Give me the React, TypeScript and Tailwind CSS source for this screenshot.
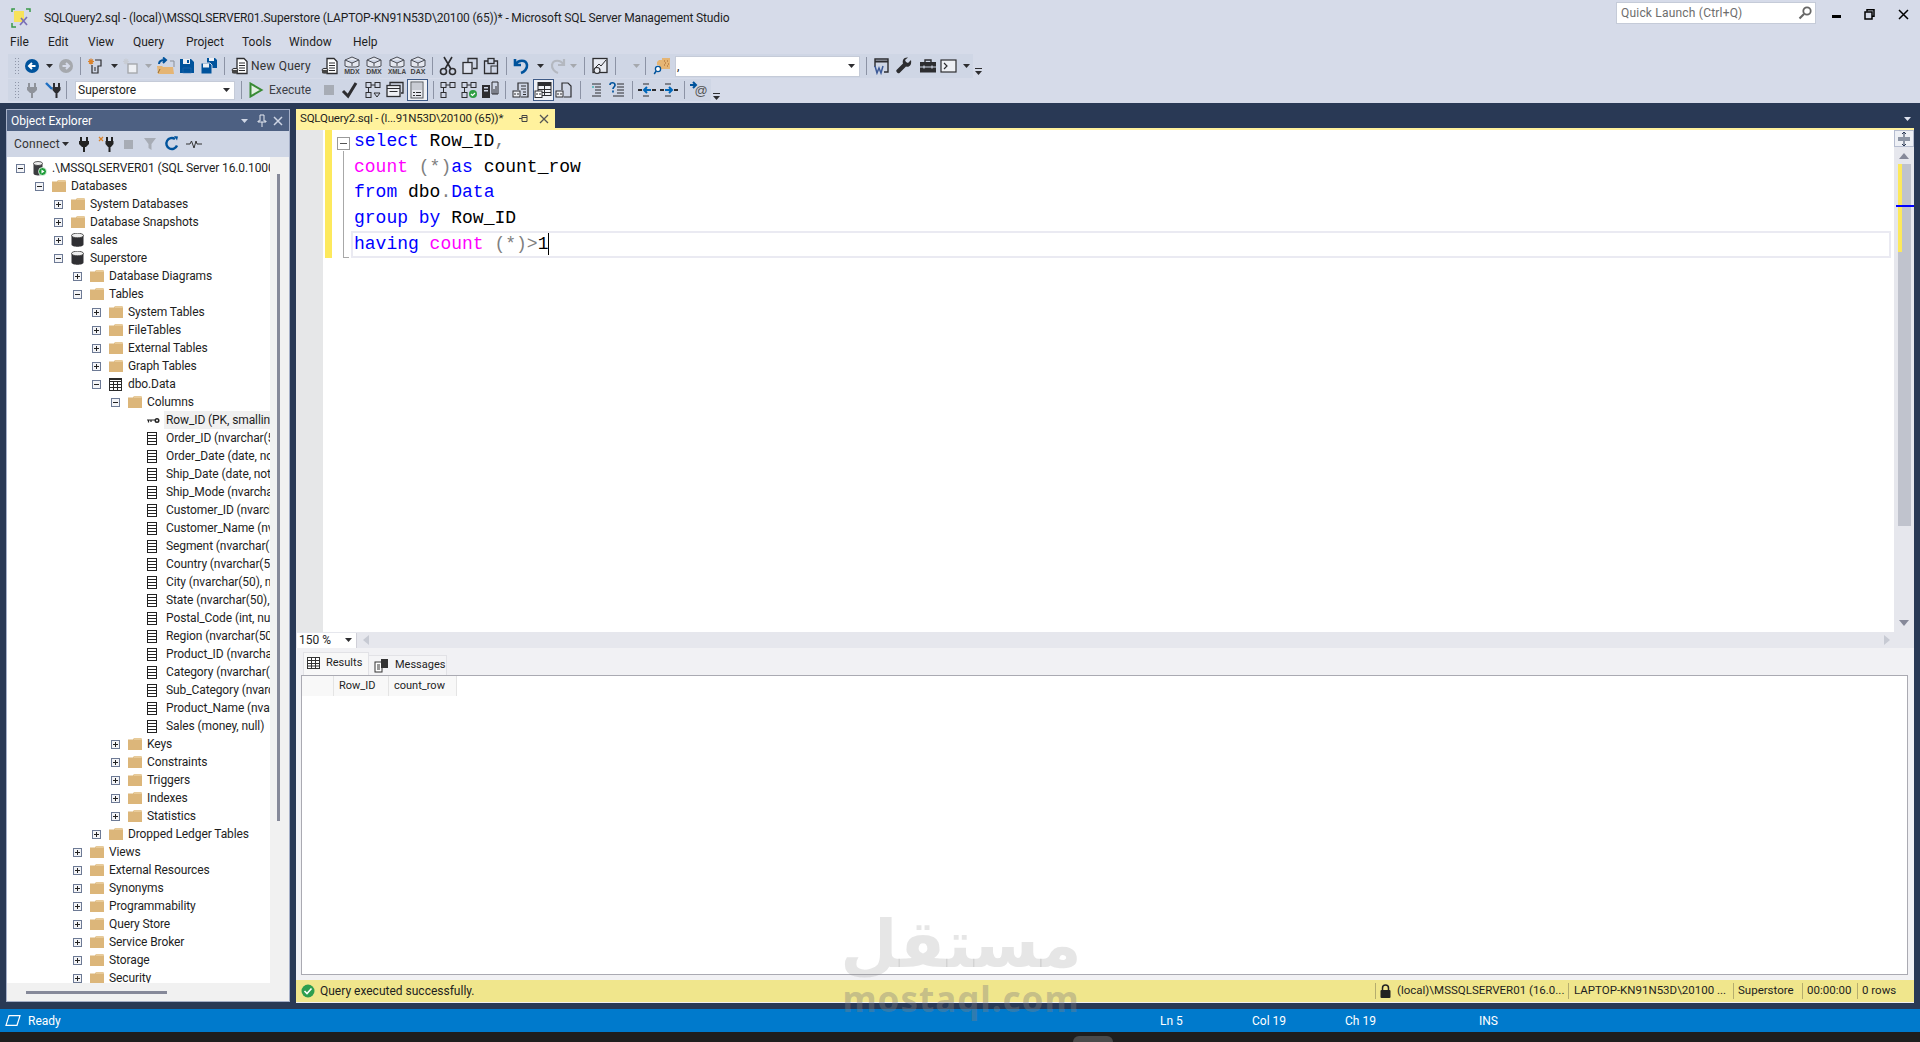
import React from "react";

const ui = "font-['Roboto',sans-serif]";

function V({ children, w = 16, h = 16, vb = "0 0 16 16" }: { children: React.ReactNode; w?: number; h?: number; vb?: string }) {
  return <svg width={w} height={h} viewBox={vb} className="block shrink-0" fill="none">{children}</svg>;
}
const K = "#2d2d30";
const B = "#00539c";

const Dd = ({ c = "#2d2d30" }: { c?: string }) => <V w={7} h={4} vb="0 0 7 4"><path d="M0 0h7L3.5 4z" fill={c} /></V>;
const Back = () => <V><circle cx="8" cy="8" r="7" fill={B} /><path d="M11.5 8H5.5M8 5L5 8l3 3" stroke="#fff" strokeWidth="2" /></V>;
const Fwd = () => <V><circle cx="8" cy="8" r="7" fill="#a5a8ad" /><path d="M4.5 8h6M8 5l3 3-3 3" stroke="#d6dbe9" strokeWidth="2" /></V>;
const NewProj = ({ off }: { off?: boolean }) => (
  <V w={18} h={18} vb="0 0 18 18">
    <path d="M4 1.5v6M1 4.5h6M2 2.5l4 4M6 2.5l-4 4" stroke={off ? "#c8ccd4" : "#d9822b"} strokeWidth="1.2" />
    {off ? <rect x="6" y="7" width="9" height="9" fill="#eef0f4" stroke="#a5a8ad" strokeWidth="1.4" /> : <path d="M8 3h6v6h-3v7H5V8" stroke={K} strokeWidth="1.2" />}
    {!off && <path d="M7 11h2M7 13h2" stroke={K} />}
  </V>
);
const Open = () => (
  <V w={20} h={18} vb="0 0 20 18">
    <path d="M1 9h5l1 1h10l1 7H2z" fill="#e5b574" />
    <path d="M2 16l2-4" stroke="#8f6a33" />
    <path d="M14 4h4v6" stroke="#8a8f99" />
    <path d="M3 7c0-3 2-4 6-4M7 0.5L10 3 7 6" stroke={B} strokeWidth="2" />
  </V>
);
const Save = () => <V><path d="M1 1h11l3 3v11H1z" fill={B} /><rect x="4" y="1" width="7" height="5" fill="#eef0f4" /><rect x="8" y="2" width="2" height="3" fill={B} /><rect x="4" y="10" width="8" height="5" fill={B} stroke="#2d6cb0" strokeWidth=".5" /></V>;
const SaveAll = () => (
  <V w={18} h={18} vb="0 0 18 18">
    <path d="M7 1h8l2 2v8H7z" fill={B} /><rect x="9" y="1" width="5" height="3" fill="#eef0f4" />
    <path d="M1 6h9l2 2v9H1z" fill={B} stroke="#cfd6e5" /><rect x="3" y="6.5" width="6" height="4" fill="#eef0f4" />
  </V>
);
const DocLines = ({ db }: { db?: boolean }) => (
  <V w={18} h={18} vb="0 0 18 18">
    <path d="M6 1.5h7l3 3v12H6z" fill="#fff" stroke={K} strokeWidth="1.3" />
    <path d="M8 6h6M8 8.5h6M8 11h6M8 13.5h6" stroke={K} />
    {db && <><ellipse cx="4" cy="13" rx="3" ry="1.6" fill="#eee" stroke={K} /><path d="M1 13v2.5c0 1.6 6 1.6 6 0V13z" fill="#444" /></>}
  </V>
);
const Cube = ({ t }: { t: string }) => (
  <V w={20} h={20} vb="0 0 20 20">
    <path d="M10 1l7 3v6l-3 1H6l-3-1V4zM3 4l7 3 7-3M10 7v3" stroke="#4a4d55" fill="#e4e7ef" strokeWidth="1" />
    <text x="10" y="18" textAnchor="middle" fontSize={t.length > 3 ? 6.4 : 7} fontWeight="700" fontFamily="Liberation Sans" fill="#444">{t}</text>
  </V>
);
const Cut = () => <V w={18} h={20} vb="0 0 18 20"><path d="M5 1l7 12M13 1L6 13" stroke={K} strokeWidth="1.6" /><circle cx="4.5" cy="15.5" r="3" stroke={K} strokeWidth="1.6" /><circle cx="13.5" cy="15.5" r="3" stroke={K} strokeWidth="1.6" /></V>;
const Copy = () => <V w={18} h={18} vb="0 0 18 18"><path d="M7 5V1.5h9v10h-4" stroke={K} strokeWidth="1.3" /><rect x="2" y="5.5" width="9" height="11" stroke={K} strokeWidth="1.3" fill="#dfe3ee" /></V>;
const Paste = () => <V w={18} h={18} vb="0 0 18 18"><path d="M6 4H2.5v12.5h13V4H12" stroke={K} strokeWidth="1.3" /><rect x="6" y="1.5" width="6" height="5" stroke={K} strokeWidth="1.3" /><rect x="9" y="9" width="6.5" height="7.5" stroke={K} /></V>;
const Undo = ({ c = B, w = 2.6 }: { c?: string; w?: number }) => <V w={18} h={18} vb="0 0 18 18"><path d="M2 2v6h6" stroke={c} strokeWidth={w} /><path d="M3 7c2-4 10-5 11 1 .5 4-3 7-6 8" stroke={c} strokeWidth={w} /></V>;
const Redo = () => <div className="-scale-x-100"><Undo c="#b4b8c0" w={2.2} /></div>;
const Chart = () => <V w={18} h={18} vb="0 0 18 18"><rect x="2" y="1.5" width="14" height="14" stroke={K} strokeWidth="1.3" fill="#e8ebf2" /><path d="M4 11l4-4 2 2 5-6" stroke={K} /><circle cx="6" cy="13.5" r="3" fill="#e8ebf2" stroke={K} strokeWidth="1.2" /></V>;
const Find = () => <V w={18} h={18} vb="0 0 18 18"><path d="M4 5l2-2h3V1h8v11H6V8H4z" fill="#e5b574" /><path d="M11 4h1M14 4h1M12 6h1M15 7h1M11 8h1M14 9h1" stroke="#a0622a" /><circle cx="5" cy="12" r="2.6" fill="#fff" stroke={B} strokeWidth="1.3" /><path d="M3.2 14l-2 3" stroke={B} strokeWidth="1.5" /></V>;
const WinCode = () => <V w={18} h={18} vb="0 0 18 18"><path d="M2 10V2h13v13h-4" stroke={K} strokeWidth="1.4" /><path d="M2 4.5h13" stroke={K} strokeWidth="2" /><path d="M2 9l2 7 2-5 2 5 2-7" stroke="#3d5a98" strokeWidth="1.5" /></V>;
const Wrench = () => <V w={18} h={18} vb="0 0 18 18"><path d="M16 3l-3 3-2-1-1-2 3-2.5C9 0 7 3 8 6.5L1.5 13c-1 1.5 1.5 4 3 3L11 9.5c3 1 6-1 5-6.5z" fill={K} /></V>;
const Toolbox = () => <V w={18} h={16} vb="0 0 18 16"><path d="M6 4V2h6v2" stroke={K} strokeWidth="1.4" /><rect x="1" y="4" width="16" height="4.5" fill={K} /><rect x="1" y="9.5" width="16" height="5" fill={K} /><path d="M5 7.5v3M13 7.5v3" stroke="#cfd6e5" strokeWidth="1.2" /></V>;
const Term = () => <V w={18} h={14} vb="0 0 18 14"><rect x="1" y="1" width="15" height="12" fill="#eef0f4" stroke={K} strokeWidth="1.2" /><path d="M4 4l3 3-3 3" stroke={K} strokeWidth="1.2" /></V>;
const Plug = ({ c = "#8f939b" }: { c?: string }) => <V><path d="M5 1v4M11 1v4" stroke={c} strokeWidth="2" /><path d="M3 5h10v3l-3 3H6L3 8z" fill={c} /><path d="M8 11v5" stroke={c} strokeWidth="2" /></V>;
const PlugBlue = () => <V w={18} h={16} vb="0 0 18 16"><path d="M9 1v4M14 1v4" stroke={K} strokeWidth="2" /><path d="M7.5 5h8v3l-2.5 3h-3l-2.5-3z" fill={K} /><path d="M11.5 11v5" stroke={K} strokeWidth="2" /><path d="M1 1l6 6" stroke="#1e6fc2" strokeWidth="2.4" /></V>;
const PlugBlueX = () => <V w={18} h={16} vb="0 0 18 16"><path d="M9 1v4M14 1v4" stroke="#222" strokeWidth="2" /><path d="M7.5 5h8v3l-2.5 3h-3l-2.5-3z" fill="#222" /><path d="M11.5 11v5" stroke="#222" strokeWidth="2" /><path d="M1 1l4 4M5 1L1 5" stroke="#d9822b" strokeWidth="1.3" /></V>;
const Play = () => <V><path d="M2.5 1.5l11 6.5-11 6.5z" fill="#e3efe2" stroke="#388a34" strokeWidth="2" /></V>;
const Stop = () => <div className="w-[10px] h-[10px] bg-[#a7acb5]" />;
const Check = () => <V w={18} h={18} vb="0 0 18 18"><path d="M2 10l5 5L15 2" stroke={K} strokeWidth="3" /></V>;
const Flow = ({ v = 0 }: { v?: number }) => (
  <V w={18} h={18} vb="0 0 18 18">
    <rect x="2" y="1.5" width="5" height="5" stroke={K} /><rect x="11" y="1.5" width="5" height="5" stroke={K} /><path d="M7 4h4M4.5 6.5v5" stroke={K} />
    <rect x="2" y="11.5" width="5" height="5" stroke={K} />
    {v === 1 && <path d="M10 12h6l-3 4z" stroke={K} />}
    {v === 2 && <><circle cx="13" cy="13" r="4" fill="#2f9e44" /><path d="M11 13l1.5 1.5L15 12" stroke="#fff" strokeWidth="1.2" /></>}
  </V>
);
const Stack = () => <V w={18} h={18} vb="0 0 18 18"><path d="M4 4V1.5h13V12h-2" stroke={K} strokeWidth="1.3" /><rect x="1" y="4.5" width="13" height="11" fill="#eef0f4" stroke={K} strokeWidth="1.3" /><path d="M1 7.5h13M3.5 10.5h8" stroke={K} strokeWidth="1.2" /></V>;
const Calc = () => <V w={16} h={18} vb="0 0 16 18"><rect x="2" y="1" width="12" height="16" fill="#e7e9ef" stroke="#55585f" /><rect x="3" y="2" width="10" height="7" fill="#c9ccd4" /><path d="M4 11.5h2M7 11.5h5M4 14.5h2M7 14.5h5" stroke={K} strokeWidth="1.2" /></V>;
const Server = () => <V w={18} h={18} vb="0 0 18 18"><rect x="1" y="4" width="8" height="13" fill={K} /><rect x="3" y="6" width="4" height="1.5" fill="#cfd6e5" /><rect x="3" y="9" width="4" height="1.5" fill="#cfd6e5" /><path d="M11 1h6v12h-6zM13 8v5M15 5v8" stroke={K} /></V>;
const DocMini = () => <V w={18} h={18} vb="0 0 18 18"><path d="M6 9V2h10v14H9" stroke={K} strokeWidth="1.2" /><path d="M9 5h5M9 8h5M11 11h3M11 13.5h3" stroke={K} /><rect x="1" y="10" width="7" height="6" fill="#eef0f4" stroke={K} /><path d="M3 12v2M6 12v2" stroke={K} /></V>;
const GridMini = () => <V w={18} h={18} vb="0 0 18 18"><rect x="4" y="1.5" width="13" height="13" fill="#f2f3f7" stroke={K} /><path d="M4 1.5h13V5H4z" fill={K} /><path d="M4 8.5h13M4 11.5h13M10.5 5v9.5" stroke={K} /><rect x="1" y="10" width="7" height="6.5" fill="#fff" stroke={K} /><path d="M3 12v2M6 12v2" stroke={K} /></V>;
const FileMini = () => <V w={18} h={18} vb="0 0 18 18"><path d="M7 9V2h6l3 3v11H9" stroke={K} strokeWidth="1.2" /><rect x="1" y="10" width="7" height="6" fill="#eef0f4" stroke={K} /><path d="M3 12v2M6 12v2" stroke={K} /></V>;
const Lines = () => <V w={18} h={16} vb="0 0 18 16"><path d="M5 2h9M8 5h6M8 8h6M8 11h6M5 14h9" stroke={K} /><path d="M5 5h2" stroke="#00a19a" /></V>;
const Help = () => <V w={18} h={18} vb="0 0 18 18"><path d="M2 4c0-3 5-3 5 0 0 2-2 2-2 4" stroke={B} strokeWidth="1.7" /><path d="M5 9.5v2" stroke={B} strokeWidth="1.7" /><path d="M9 3h7M9 6h7M9 9h7M9 12h7M5 15h11" stroke={K} /></V>;
const Indent = ({ rev }: { rev?: boolean }) => <V w={18} h={16} vb="0 0 18 16"><path d="M5 2h6M5 14h6" stroke={K} strokeWidth="1.2" /><path d="M0 8h4M14 8h4" stroke={K} strokeWidth="2" />{rev ? <path d="M13 8H6M9 5L6 8l3 3" stroke="#0067b8" strokeWidth="2" /> : <path d="M5 8h7M9 5l3 3-3 3" stroke="#0067b8" strokeWidth="2" />}</V>;
const Mail = () => <V w={20} h={20} vb="0 0 20 20"><path d="M1 5h6M4 2l3 3-3 3" stroke={B} strokeWidth="2" /><text x="12" y="15" textAnchor="middle" fontSize="13" fontFamily="Liberation Sans" fill="#555">@</text></V>;

const Grip = () => <div className="w-[5px] h-[19px] [background-image:radial-gradient(#8f96a8_0.8px,transparent_0.9px)] [background-size:3px_3px]" />;
const Sep = () => <div className="w-px h-[18px] bg-[#8c93a5]" />;
const Slot = ({ c, children }: { c: string; children?: React.ReactNode }) => <div className={`${c} h-full flex items-center justify-center shrink-0`}>{children}</div>;
const Overflow = () => <div className="flex flex-col items-center justify-end h-full pb-[3px] w-[11px] bg-[#d6dbe9]"><div className="w-[7px] h-px bg-[#2d2d30] mb-[2px]" /><Dd /></div>;
const Boxed = ({ children }: { children: React.ReactNode }) => <div className="w-[21px] h-[22px] flex items-center justify-center border border-[#3e5a86] bg-[#eef0f5]">{children}</div>;

function Toolbar1() {
  return (
    <div className="h-[25px] pt-[1px] flex items-stretch ml-[8px] w-[976px]">
      <div className="flex items-center h-[24px] w-[965px] bg-[#cfd6e5] text-[12px] text-[#1e1e1e]">
        <Slot c="w-[14px] pl-[2px]"><Grip /></Slot>
        <Slot c="w-[20px]"><Back /></Slot><Slot c="w-[14px]"><Dd /></Slot><Slot c="w-[19px]"><Fwd /></Slot>
        <Slot c="w-[10px]"><Sep /></Slot>
        <Slot c="w-[21px]"><NewProj /></Slot><Slot c="w-[16px]"><Dd /></Slot>
        <Slot c="w-[18px]"><NewProj off /></Slot><Slot c="w-[17px]"><Dd c="#a5a8ad" /></Slot>
        <Slot c="w-[18px]"><Open /></Slot><Slot c="w-[24px]"><Save /></Slot><Slot c="w-[20px]"><SaveAll /></Slot>
        <Slot c="w-[10px]"><Sep /></Slot>
        <Slot c="w-[22px]"><DocLines db /></Slot>
        <Slot c="w-[68px] !justify-start"><span className="whitespace-nowrap tracking-[0.2px] text-[#333]">New Query</span></Slot>
        <Slot c="w-[22px]"><DocLines db /></Slot>
        <Slot c="w-[22px]"><Cube t="MDX" /></Slot><Slot c="w-[22px]"><Cube t="DMX" /></Slot><Slot c="w-[23px]"><Cube t="XMLA" /></Slot><Slot c="w-[20px]"><Cube t="DAX" /></Slot>
        <Slot c="w-[8px]"><Sep /></Slot>
        <Slot c="w-[23px]"><Cut /></Slot><Slot c="w-[22px]"><Copy /></Slot><Slot c="w-[20px]"><Paste /></Slot>
        <Slot c="w-[10px]"><Sep /></Slot>
        <Slot c="w-[22px]"><Undo /></Slot><Slot c="w-[14px]"><Dd /></Slot><Slot c="w-[20px]"><Redo /></Slot><Slot c="w-[13px]"><Dd c="#a5a8ad" /></Slot>
        <Slot c="w-[9px]"><Sep /></Slot>
        <Slot c="w-[22px]"><Chart /></Slot>
        <Slot c="w-[9px]"><Sep /></Slot>
        <Slot c="w-[10px]" /><Slot c="w-[12px]"><Dd c="#a5a8ad" /></Slot>
        <Slot c="w-[7px]"><Sep /></Slot>
        <Slot c="w-[26px]"><Find /></Slot>
        <div className="w-[185px] h-[21px] bg-white border border-[#c5cbd8] flex items-center justify-between pl-[1px] pr-[4px] shrink-0"><span className="leading-none">,</span><Dd /></div>
        <Slot c="w-[13px]"><Sep /></Slot>
        <Slot c="w-[18px]"><WinCode /></Slot><Slot c="w-[26px]"><Wrench /></Slot><Slot c="w-[21px]"><Toolbox /></Slot><Slot c="w-[22px]"><Term /></Slot><Slot c="w-[13px]"><Dd /></Slot>
      </div>
      <Overflow />
    </div>
  );
}

function Toolbar2() {
  return (
    <div className="h-[25px] pt-[1px] flex items-stretch ml-[8px]">
      <div className="flex items-center h-[22px] w-[703px] bg-[#cfd6e5] text-[12px] text-[#1e1e1e]">
        <Slot c="w-[14px] pl-[2px]"><Grip /></Slot>
        <Slot c="w-[20px]"><Plug /></Slot><Slot c="w-[24px]"><PlugBlue /></Slot>
        <Slot c="w-[9px] !justify-start"><Sep /></Slot>
        <div className="w-[160px] h-[19px] bg-white border border-[#c5cbd8] flex items-center justify-between pl-[2px] pr-[4px] shrink-0"><span>Superstore</span><Dd /></div>
        <Slot c="w-[12px]"><Sep /></Slot>
        <Slot c="w-[18px]"><Play /></Slot>
        <Slot c="w-[54px] !justify-start pl-[4px]"><span className="text-[#3c3f46]">Execute</span></Slot>
        <Slot c="w-[20px]"><Stop /></Slot><Slot c="w-[22px]"><Check /></Slot><Slot c="w-[23px]"><Flow v={1} /></Slot><Slot c="w-[22px]"><Stack /></Slot>
        <Slot c="w-[22px]"><Boxed><Calc /></Boxed></Slot>
        <Slot c="w-[10px]"><Sep /></Slot>
        <Slot c="w-[20px]"><Flow /></Slot><Slot c="w-[22px]"><Flow v={2} /></Slot><Slot c="w-[20px]"><Server /></Slot>
        <Slot c="w-[10px]"><Sep /></Slot>
        <Slot c="w-[22px]"><DocMini /></Slot><Slot c="w-[22px]"><Boxed><GridMini /></Boxed></Slot><Slot c="w-[20px]"><FileMini /></Slot>
        <Slot c="w-[12px]"><Sep /></Slot>
        <Slot c="w-[20px]"><Lines /></Slot><Slot c="w-[22px]"><Help /></Slot>
        <Slot c="w-[8px]"><Sep /></Slot>
        <Slot c="w-[22px]"><Indent rev /></Slot><Slot c="w-[22px]"><Indent /></Slot>
        <Slot c="w-[8px]"><Sep /></Slot>
        <Slot c="w-[22px]"><Mail /></Slot>
      </div>
      <Overflow />
    </div>
  );
}

const Expander = ({ open }: { open: boolean }) => (
  <div className="w-[9px] h-[9px] border border-[#6d7a95] bg-[#f3f4f7] flex items-center justify-center relative">
    <div className="w-[5px] h-px bg-[#222]" />
    {!open && <div className="absolute w-px h-[5px] bg-[#222]" />}
  </div>
);
const Folder = () => <V w={14} h={12} vb="0 0 14 12"><path d="M0 1.5h5L6 0h7.5v1.5H14V12H0z" fill="#dcb67a" /><path d="M6 1h7" stroke="#f3dfb8" /></V>;
const Db = () => <V w={13} h={14} vb="0 0 13 14"><path d="M.5 2.5v9c0 3 12 3 12 0v-9z" fill="#2f2f33" /><ellipse cx="6.5" cy="2.5" rx="6" ry="2.3" fill="#eee" stroke="#333" strokeWidth=".8" /></V>;
const SrvIcon = () => <V w={14} h={15} vb="0 0 14 15"><path d="M.5 2.5v10c0 2.5 9 2.5 9 0v-10z" fill="#3c3c40" /><ellipse cx="5" cy="2.5" rx="4.5" ry="2" fill="#eee" stroke="#333" strokeWidth=".8" /><circle cx="9.5" cy="10.5" r="4" fill="#1f9d3a" stroke="#fff" strokeWidth=".8" /><path d="M8.5 8.5l3 2-3 2z" fill="#fff" /></V>;
const TableIcon = () => <V w={13} h={13} vb="0 0 13 13"><rect x=".5" y=".5" width="12" height="12" fill="#fff" stroke="#2a2a2a" /><path d="M.5 1.5h12M.5 3.5h12M.5 6.5h12M.5 9.5h12M4.5 3v10M8.5 3v10" stroke="#2a2a2a" /></V>;
const KeyIcon = () => <V w={13} h={7} vb="0 0 13 7"><circle cx="10" cy="3.5" r="2.5" fill="#222" /><circle cx="10" cy="3.5" r="1" fill="#fff" /><path d="M0 3h8M1.5 3v2.5M4 3v2" stroke="#222" strokeWidth="1.2" /></V>;
const ColIcon = () => <V w={10} h={13} vb="0 0 10 13"><rect x=".5" y=".5" width="9" height="12" fill="#fff" stroke="#222" /><path d="M.5 3.5h9M.5 6.5h9M.5 9.5h9" stroke="#222" /></V>;

type Row = [number, string, "o" | "c" | "n", "srv" | "f" | "db" | "t" | "k" | "col", string];
const columns = ["Row_ID (PK, smallint, not null)", "Order_ID (nvarchar(50), null)", "Order_Date (date, not null)", "Ship_Date (date, not null)", "Ship_Mode (nvarchar(50), null)", "Customer_ID (nvarchar(50), null)", "Customer_Name (nvarchar(50), null)", "Segment (nvarchar(50), null)", "Country (nvarchar(50), null)", "City (nvarchar(50), null)", "State (nvarchar(50), null)", "Postal_Code (int, null)", "Region (nvarchar(50), null)", "Product_ID (nvarchar(50), null)", "Category (nvarchar(50), null)", "Sub_Category (nvarchar(50), null)", "Product_Name (nvarchar(50), null)", "Sales (money, null)"];
const rows: Row[] = [
  [0, ".\\MSSQLSERVER01 (SQL Server 16.0.1000.6 - LAPTOP)", "o", "srv", ""],
  [1, "Databases", "o", "f", ""],
  [2, "System Databases", "c", "f", ""],
  [2, "Database Snapshots", "c", "f", ""],
  [2, "sales", "c", "db", ""],
  [2, "Superstore", "o", "db", ""],
  [3, "Database Diagrams", "c", "f", ""],
  [3, "Tables", "o", "f", ""],
  [4, "System Tables", "c", "f", ""],
  [4, "FileTables", "c", "f", ""],
  [4, "External Tables", "c", "f", ""],
  [4, "Graph Tables", "c", "f", ""],
  [4, "dbo.Data", "o", "t", ""],
  [5, "Columns", "o", "f", ""],
  ...columns.map((c, i): Row => [6, c, "n", i === 0 ? "k" : "col", i === 0 ? "sel" : ""]),
  [5, "Keys", "c", "f", ""],
  [5, "Constraints", "c", "f", ""],
  [5, "Triggers", "c", "f", ""],
  [5, "Indexes", "c", "f", ""],
  [5, "Statistics", "c", "f", ""],
  [4, "Dropped Ledger Tables", "c", "f", ""],
  [3, "Views", "c", "f", ""],
  [3, "External Resources", "c", "f", ""],
  [3, "Synonyms", "c", "f", ""],
  [3, "Programmability", "c", "f", ""],
  [3, "Query Store", "c", "f", ""],
  [3, "Service Broker", "c", "f", ""],
  [3, "Storage", "c", "f", ""],
  [3, "Security", "c", "f", ""],
];
const indent = ["w-[4px]", "w-[23px]", "w-[42px]", "w-[61px]", "w-[80px]", "w-[99px]", "w-[118px]"];

function TreeRow({ r }: { r: Row }) {
  const [lvl, text, st, ic, sel] = r;
  return (
    <div className="h-[18px] flex items-center whitespace-nowrap">
      <div className={`${indent[lvl]} shrink-0`} />
      <div className="w-[19px] shrink-0 flex justify-center">{st !== "n" && <Expander open={st === "o"} />}</div>
      <div className="w-[20px] shrink-0 flex pl-[3px]">
        {ic === "f" && <Folder />}{ic === "db" && <Db />}{ic === "srv" && <SrvIcon />}{ic === "t" && <TableIcon />}{ic === "k" && <KeyIcon />}{ic === "col" && <ColIcon />}
      </div>
      <div className={`h-[18px] flex items-center pl-[2px] pr-[100px] ${sel ? "bg-[#f0f0f0]" : ""}`}>{text}</div>
    </div>
  );
}

function ObjectExplorer() {
  return (
    <div className="w-[284px] h-[893px] mt-[6px] ml-[6px] shrink-0 flex flex-col border border-[#a6b0c8] bg-[#f1f1f1] text-[12px] text-[#1e1e1e]">
      <div className="h-[21px] bg-[#4d6082] flex items-center text-white pl-[4px] pr-[5px] shrink-0">
        <span className="flex-1">Object Explorer</span>
        <Dd c="#cfd6e5" />
        <span className="ml-[9px] mr-[5px]"><V w={10} h={13} vb="0 0 10 13"><path d="M3 1h4v6h2v1H1V7h2zM5 8v5" stroke="#e6e9f1" /></V></span>
        <V w={12} h={12} vb="0 0 12 12"><path d="M2 2l8 8M10 2l-8 8" stroke="#cfd6e5" strokeWidth="1.5" /></V>
      </div>
      <div className="h-[26px] bg-[#cfd6e5] flex items-center shrink-0">
        <span className="ml-[7px] w-[47px] text-[#333] tracking-[0.2px]">Connect</span>
        <Slot c="w-[8px]"><Dd /></Slot>
        <Slot c="w-[30px]"><Plug c="#222" /></Slot>
        <Slot c="w-[16px]"><PlugBlueX /></Slot>
        <Slot c="w-[26px]"><div className="w-[9px] h-[9px] bg-[#a7acb5]" /></Slot>
        <Slot c="w-[18px]"><V><path d="M2 2h12L9.5 8v6l-3-2V8z" fill="#a7acb5" /></V></Slot>
        <Slot c="w-[26px]"><V><path d="M13 9.5a5.5 5.5 0 1 1-2-6.5" stroke={B} strokeWidth="2.4" /><path d="M10 0l4 .5-1 4z" fill={B} /></V></Slot>
        <Slot c="w-[18px]"><V><path d="M0 8h4l1.5-3L8 12l2-7 1 3h5" stroke="#333" /></V></Slot>
      </div>
      <div className="flex-1 flex min-h-0">
        <div className="w-[263px] h-[826px] bg-white overflow-hidden pt-[2px] shrink-0 tracking-[-0.1px]">
          {rows.map((r, i) => <TreeRow key={i} r={r} />)}
        </div>
        <div className="flex-1 pl-[7px] pt-[17px]"><div className="w-[3px] h-[647px] bg-[#868999]" /></div>
      </div>
      <div className="h-[17px] shrink-0 pl-[19px] pt-[7px] -mt-[17px] z-10"><div className="h-[3px] w-[141px] bg-[#868999]" /></div>
    </div>
  );
}

const kw = "text-[#0000ff]", fn = "text-[#ff00ff]", gr = "text-[#808080]", bk = "text-black";
const Code = ({ c, t }: { c: string; t: string }) => <span className={c}>{t}</span>;

function Editor() {
  return (
    <div className="h-[502px] flex bg-white shrink-0 overflow-hidden">
      <div className="w-[27px] bg-[#e6e7e8] shrink-0" />
      <div className="w-[2px] shrink-0" />
      <div className="w-[7px] h-[128px] bg-[#fde95c] shrink-0" />
      <div className="w-[19px] shrink-0 flex flex-col items-center pt-[7px]">
        <div className="w-[13px] h-[13px] border border-[#9a9a9a] flex items-center justify-center ml-[3px]"><div className="w-[7px] h-px bg-[#555]" /></div>
        <div className="w-px h-[106px] bg-[#a8a8a8] ml-[3px] mt-[1px]" />
        <div className="w-[6px] h-px bg-[#a8a8a8] ml-[8px]" />
      </div>
      <div className="flex-1 -mt-[1px] font-['Liberation_Mono',monospace] text-[18px] leading-[25.5px] whitespace-pre">
        <div className="pl-[3px] h-[25.5px]"><Code c={kw} t="select" /><Code c={bk} t=" Row_ID" /><Code c={gr} t="," /></div>
        <div className="pl-[3px] h-[25.5px]"><Code c={fn} t="count" /><Code c={gr} t=" (*)" /><Code c={kw} t="as" /><Code c={bk} t=" count_row" /></div>
        <div className="pl-[3px] h-[25.5px]"><Code c={kw} t="from" /><Code c={bk} t=" dbo" /><Code c={gr} t="." /><Code c={kw} t="Data" /></div>
        <div className="pl-[3px] h-[25.5px]"><Code c={kw} t="group by" /><Code c={bk} t=" Row_ID" /></div>
        <div className="h-[27px] border-2 border-[#eaeaf2] pl-[1px] mr-[3px] leading-[23px] flex">
          <Code c={kw} t="having" /><Code c={fn} t=" count" /><Code c={gr} t=" (*)>" /><Code c={bk} t="1" /><div className="w-px h-[22px] bg-black" />
        </div>
      </div>
      <div className="w-[20px] bg-[#e6e7ed] shrink-0 flex flex-col items-center">
        <div className="w-[20px] h-[17px] border border-[#b6bdd0] bg-[#eef0f5] flex items-center justify-center shrink-0"><V w={12} h={14} vb="0 0 12 14"><path d="M0 6h12M0 8h12M6 0v5M6 9v5M4 2l2-2 2 2M4 12l2 2 2-2" stroke="#2d3a55" /></V></div>
        <div className="h-[17px] flex items-center shrink-0"><V w={10} h={6} vb="0 0 10 6"><path d="M5 0l5 6H0z" fill="#868999" /></V></div>
        <div className="relative w-[13px] h-[362px] bg-[#c0c3cd] shrink-0">
          <div className="w-[4px] h-[88px] bg-[#fde95c]" />
          <div className="absolute left-[-2px] top-[41px] w-[19px] h-[2px] bg-[#0000ff]" />
        </div>
        <div className="flex-1" />
        <div className="h-[18px] flex items-center shrink-0"><V w={10} h={6} vb="0 0 10 6"><path d="M5 6l5-6H0z" fill="#868999" /></V></div>
      </div>
    </div>
  );
}

const Bar = ({ m }: { m: string }) => <div className={`w-px h-[16px] bg-[#b5ad6e] shrink-0 ${m}`} />;

function Results() {
  return (
    <div className="flex-1 min-h-0 flex flex-col bg-[#f1f1f4] text-[11px] text-[#1e1e1e]">
      <div className="h-[16px] bg-[#e6e7ed] flex items-center shrink-0">
        <div className="w-[60px] h-[15px] ml-[1px] bg-white border-r border-[#d0d0d8] flex items-center justify-between pl-[2px] pr-[4px] text-[12px]"><span>150 %</span><Dd /></div>
        <span className="ml-[6px]"><V w={6} h={10} vb="0 0 6 10"><path d="M6 0v10L0 5z" fill="#c7cad3" /></V></span>
        <span className="ml-auto mr-[24px]"><V w={6} h={10} vb="0 0 6 10"><path d="M0 0v10l6-5z" fill="#c7cad3" /></V></span>
      </div>
      <div className="h-[27px] flex items-end pl-[7px] shrink-0">
        <div className="w-[66px] h-[23px] bg-[#f8f8f8] border-t border-x border-[#e2e2e6] flex items-center pl-[3px] gap-[6px] pb-[2px]"><V w={13} h={12} vb="0 0 13 12"><rect x=".5" y=".5" width="12" height="11" fill="#fff" stroke="#333" /><path d="M.5 3.5h12M.5 6.5h12M.5 9h12M4.5 1v10M8.5 1v10" stroke="#333" /></V><span>Results</span></div>
        <div className="w-[78px] h-[20px] bg-[#f4f4f6] border-t border-r border-[#e2e2e6] flex items-center pl-[5px] gap-[6px]"><V w={15} h={14} vb="0 0 15 14"><rect x="1" y="3" width="7" height="10" fill="#fff" stroke="#333" /><path d="M3 6h3M3 8h3M3 10h3" stroke="#333" /><rect x="7" y="0" width="7" height="9" fill="#333" /></V><span>Messages</span></div>
      </div>
      <div className="h-[300px] ml-[5px] mr-[6px] border border-[#aaaab2] bg-white shrink-0 flex items-start">
        <div className="w-[32px] h-[20px] bg-[#f8f8f8] border-r border-[#e4e4e4]" />
        <div className="w-[55px] h-[20px] bg-[#f8f8f8] border-r border-[#e4e4e4] flex items-center pl-[5px]">Row_ID</div>
        <div className="w-[68px] h-[20px] bg-[#f8f8f8] border-r border-[#e4e4e4] flex items-center pl-[5px]">count_row</div>
      </div>
      <div className="flex-1" />
      <div className="h-[22px] mb-px bg-[#f0e68c] flex items-center text-[12px] shrink-0">
        <span className="ml-[5px]"><V w={14} h={14} vb="0 0 14 14"><circle cx="7" cy="7" r="6.5" fill="#2e9e4f" /><path d="M3.5 7l2.5 2.5L10.5 4.5" stroke="#fff" strokeWidth="1.6" /></V></span>
        <span className="ml-[5px]">Query executed successfully.</span>
        <div className="ml-auto w-[539px] flex items-center shrink-0 text-[11.5px]">
          <Bar m="mr-[3px]" />
          <V w={13} h={14} vb="0 0 13 14"><path d="M3.5 6V4a3 3 0 0 1 6 0v2" stroke="#222" strokeWidth="1.5" /><rect x="1.5" y="6" width="10" height="8" rx="1" fill="#222" /></V>
          <span className="ml-[5px] w-[171px] whitespace-nowrap">(local)\MSSQLSERVER01 (16.0...</span>
          <Bar m="mr-[5px]" />
          <span className="w-[159px] whitespace-nowrap">LAPTOP-KN91N53D\20100 ...</span>
          <Bar m="mr-[4px]" />
          <span className="w-[64px] whitespace-nowrap">Superstore</span>
          <Bar m="mr-[4px]" />
          <span className="w-[50px] whitespace-nowrap">00:00:00</span>
          <Bar m="mr-[4px]" />
          <span className="whitespace-nowrap">0 rows</span>
        </div>
      </div>
    </div>
  );
}

export default function App() {
  return (
    <div className={`${ui} relative w-[1920px] h-[1042px] overflow-hidden flex flex-col bg-[#d6dbe9] text-[12px] text-[#1e1e1e]`}>
      <div className="h-[31px] flex shrink-0">
        <div className="w-[36px] flex justify-center pl-[6px] pt-[8px] shrink-0">
          <V w={20} h={20} vb="0 0 20 20">
            <path d="M1 4V1h3M15 1h4v3M1 15v4h4" stroke="#3a9a48" strokeWidth="1.5" />
            <rect x="3" y="3" width="10" height="11" fill="#f7e25b" />
            <path d="M9 17l7-8M10 10l6 7" stroke="#7a6fb5" strokeWidth="1.6" />
          </V>
        </div>
        <div className="pt-[9px] whitespace-nowrap leading-[18px] pl-[8px] tracking-[-0.16px]">SQLQuery2.sql - (local)\MSSQLSERVER01.Superstore (LAPTOP-KN91N53D\20100 (65))* - Microsoft SQL Server Management Studio</div>
        <div className="ml-auto flex shrink-0 items-start">
          <div className="w-[200px] h-[22px] mt-[2px] bg-white border border-[#c5cbd8] flex items-center justify-between pl-[4px] pr-[3px] text-[#6d6d6d] tracking-[0.2px]"><span>Quick Launch (Ctrl+Q)</span><V w={14} h={14} vb="0 0 14 14"><circle cx="9" cy="5" r="3.7" stroke="#666" strokeWidth="1.8" /><path d="M6 8l-4.5 4.5" stroke="#666" strokeWidth="2.2" /></V></div>
          <div className="w-[34px] h-[30px] ml-[3px] flex items-center justify-center"><div className="w-[9px] h-[3px] bg-black mt-[2px]" /></div>
          <div className="w-[33px] h-[28px] flex items-center justify-center"><V w={11} h={11} vb="0 0 11 11"><path d="M3 2.5V.8h7v6.5H8" stroke="#000" strokeWidth="1.5" /><rect x="1" y="3" width="7" height="7" stroke="#000" strokeWidth="1.5" /></V></div>
          <div className="w-[34px] h-[28px] flex items-center justify-center"><V w={11} h={11} vb="0 0 11 11"><path d="M1 1l9 9M10 1l-9 9" stroke="#000" strokeWidth="1.5" /></V></div>
        </div>
      </div>
      <div className="h-[22px] flex items-start shrink-0 pt-[2px] leading-[18px]">
        <span className="ml-[10px] w-[38px]">File</span><span className="w-[40px]">Edit</span><span className="w-[45px]">View</span><span className="w-[53px]">Query</span><span className="w-[56px]">Project</span><span className="w-[47px]">Tools</span><span className="w-[64px]">Window</span><span>Help</span>
      </div>
      <Toolbar1 />
      <Toolbar2 />
      <div className="flex-1 min-h-0 flex bg-[#293955]">
        <ObjectExplorer />
        <div className="ml-[6px] w-[1618px] flex flex-col h-[900px] pt-[6px] shrink-0">
          <div className="h-[19px] flex shrink-0 items-stretch">
            <div className="w-[259px] bg-[#fff29d] flex items-center pl-[4px] text-[#1e1e1e] text-[11.5px] tracking-[-0.2px]">
              <span className="flex-1 whitespace-nowrap">SQLQuery2.sql - (l...91N53D\20100 (65))*</span>
              <span className="mr-[11px]"><V w={9} h={9} vb="0 0 9 9"><path d="M0 4.5h3M3 1.5v6h5v-6zM3 3.5h5" stroke="#444" /></V></span>
              <span className="mr-[6px]"><V w={10} h={10} vb="0 0 10 10"><path d="M1 1l8 8M9 1l-8 8" stroke="#555" strokeWidth="1.3" /></V></span>
            </div>
            <div className="flex-1 flex justify-end items-end pr-[3px] pb-[7px]"><Dd c="#dfe3ee" /></div>
          </div>
          <div className="h-[2px] bg-[#fff29d] shrink-0" />
          <Editor />
          <Results />
        </div>
      </div>
      <div className="h-[23px] bg-[#007acc] text-white flex items-center shrink-0">
        <span className="ml-[5px]"><V w={16} h={11} vb="0 0 16 11"><path d="M4 .7h11l-3 9.6H1z" stroke="#fff" strokeWidth="1.2" /></V></span>
        <span className="ml-[7px] w-[1132px]">Ready</span>
        <span className="w-[92px]">Ln 5</span><span className="w-[93px]">Col 19</span><span className="w-[134px]">Ch 19</span><span>INS</span>
      </div>
      <div className="h-[10px] bg-[#1e1e1e] shrink-0 relative"><div className="absolute left-[1073px] top-[4px] w-[40px] h-[8px] rounded-t-[6px] bg-[#4a4a4a]" /></div>
      <div className="absolute left-[845px] top-[906px] w-[232px] flex flex-col items-center pointer-events-none select-none leading-none">
        <span className="font-['DejaVu_Sans',sans-serif] font-bold text-[66px] h-[78px] leading-[78px] text-[#80808033]" dir="rtl">مستقل</span>
        <span className="font-['Noto_Sans',sans-serif] font-bold text-[35px] tracking-[1px] leading-[30px] text-[#80808066]">mostaql.com</span>
      </div>
    </div>
  );
}
